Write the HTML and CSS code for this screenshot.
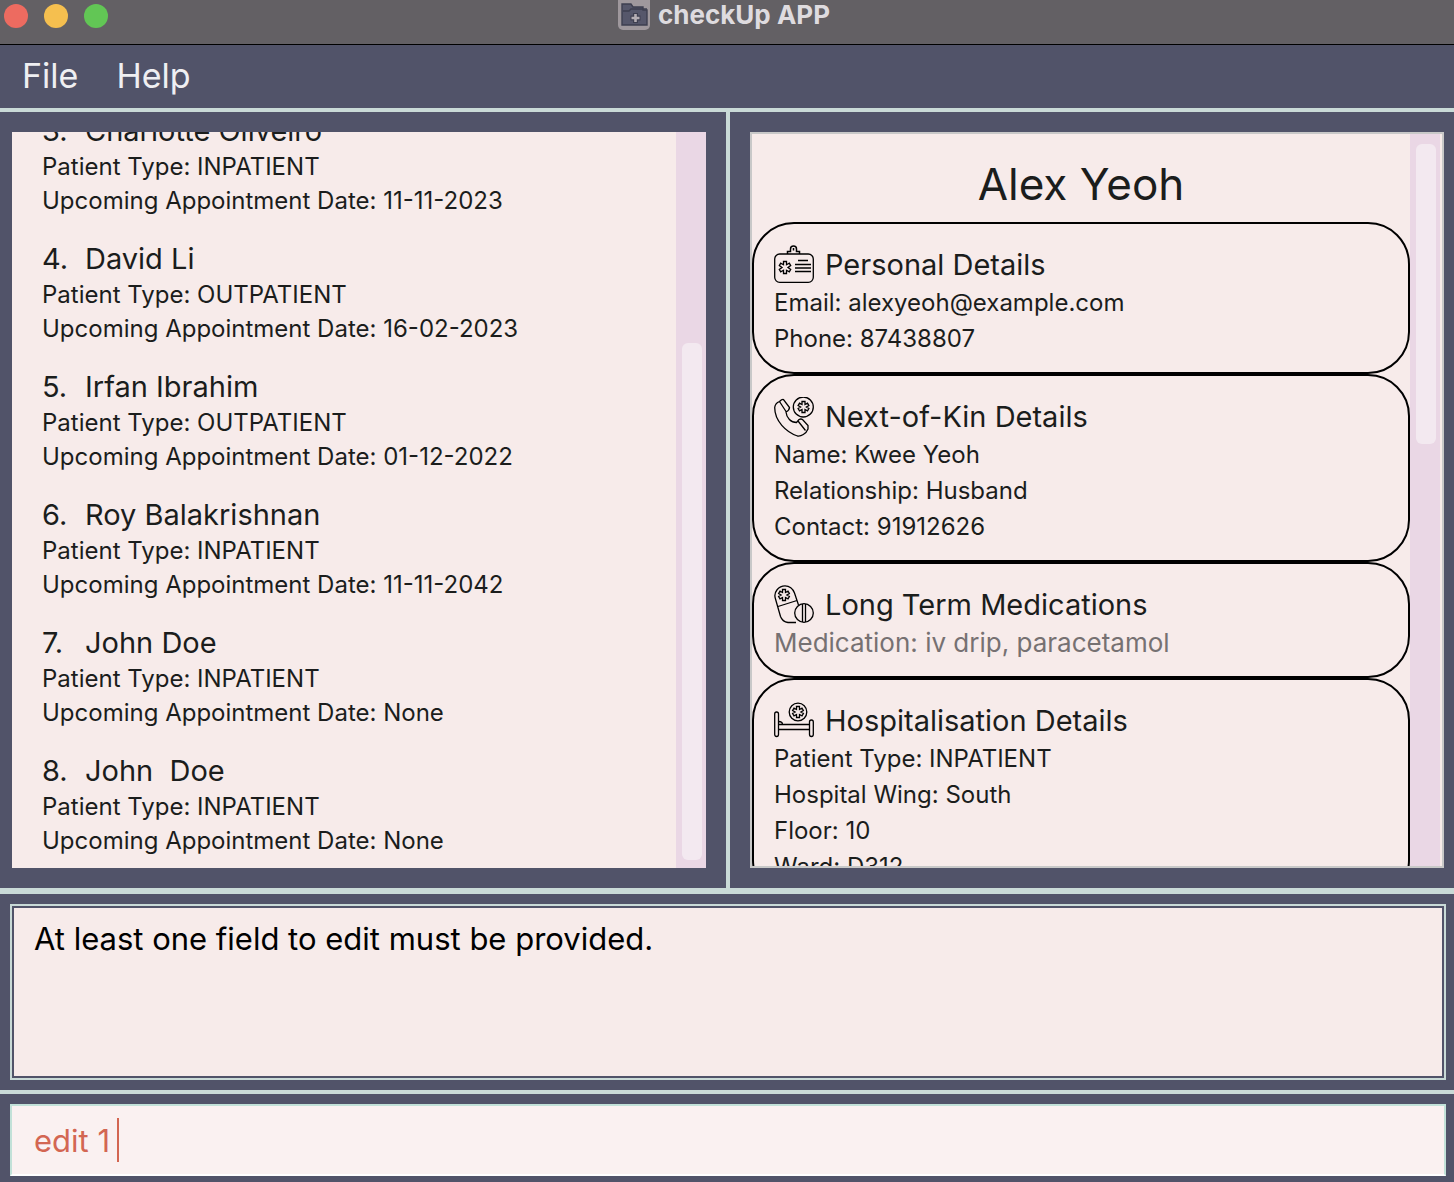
FILE: index.html
```html
<!DOCTYPE html>
<html lang="en">
<head>
<meta charset="utf-8">
<title>checkUp APP</title>
<link rel="stylesheet" href="styles.css">
</head>
<body>
<header class="titlebar">
  <div class="lights"><span class="light red"></span><span class="light amber"></span><span class="light green"></span></div>
  <svg class="app-icon" viewBox="0 0 32 32" aria-hidden="true">
    <rect y="-4" width="32" height="34" rx="5" fill="#9f989d"/>
    <path d="M4 25V4h9l2 3h10v3h4v15z" fill="#56576b" stroke="#3e3f50" stroke-width="1.4"/>
    <path d="M5 11h6l2-2h16" fill="none" stroke="#3e3f50" stroke-width="1.4"/>
    <path d="M17.500 13v10M12.500 18h10" stroke="#3e3f50" stroke-width="5"/>
    <path d="M17.500 14v8M13.500 18h8" stroke="#b5aeb4" stroke-width="2.600"/>
  </svg>
  <h1 class="app-name">checkUp APP</h1>
</header>
<nav class="menubar">
  <button class="menu" type="button">File</button>
  <button class="menu" type="button">Help</button>
</nav>
<main class="split">
  <section class="pane" aria-label="Patients">
    <div class="list-box">
      <ol class="patients">
        <li class="patient"><h2 class="patient-name"><span class="num">3.</span>Charlotte Oliveiro</h2><p>Patient Type: INPATIENT</p><p>Upcoming Appointment Date: 11-11-2023</p></li>
        <li class="patient"><h2 class="patient-name"><span class="num">4.</span>David Li</h2><p>Patient Type: OUTPATIENT</p><p>Upcoming Appointment Date: 16-02-2023</p></li>
        <li class="patient"><h2 class="patient-name"><span class="num">5.</span>Irfan Ibrahim</h2><p>Patient Type: OUTPATIENT</p><p>Upcoming Appointment Date: 01-12-2022</p></li>
        <li class="patient"><h2 class="patient-name"><span class="num">6.</span>Roy Balakrishnan</h2><p>Patient Type: INPATIENT</p><p>Upcoming Appointment Date: 11-11-2042</p></li>
        <li class="patient"><h2 class="patient-name"><span class="num">7.</span>John Doe</h2><p>Patient Type: INPATIENT</p><p>Upcoming Appointment Date: None</p></li>
        <li class="patient"><h2 class="patient-name"><span class="num">8.</span>John  Doe</h2><p>Patient Type: INPATIENT</p><p>Upcoming Appointment Date: None</p></li>
      </ol>
      <div class="track at-end"><div class="thumb list-thumb"></div></div>
    </div>
  </section>
  <section class="pane" aria-label="Patient details">
    <div class="detail-box">
      <div class="details">
        <h2 class="detail-name">Alex Yeoh</h2>
        <article class="card">
          <h3 class="card-title">
            <svg class="icon" viewBox="0 0 40 40" aria-hidden="true"><rect x=".7" y="9" width="38.600" height="28.300" rx="5"/><path d="M13.500 9V6.500h3V4a3 3 0 0 1 6 0v2.500h3V9M19.500 3v2.500M24 15.500h10M21 19.500h16M21 23h16M21 26.500h16" stroke-width="1.500"/><path d="M9.500 16.500h3v3.200l2.800-1.600 1.400 2.500-2.700 1.900 2.700 1.900-1.400 2.500-2.800-1.600v3.200h-3v-3.200l-2.800 1.600-1.400-2.500L8 22.500l-2.700-1.900 1.400-2.500 2.800 1.600z"/></svg>
            Personal Details</h3>
          <p>Email: alexyeoh@example.com</p>
          <p>Phone: 87438807</p>
        </article>
        <article class="card">
          <h3 class="card-title">
            <svg class="icon" viewBox="0 0 40 40" aria-hidden="true"><circle cx="29.300" cy="10" r="10"/><path d="M28 4.500h3v3l2.500-1.400 1.400 2.400-2.500 1.500 2.500 1.500-1.400 2.400L31 12.500v3h-3v-3l-2.500 1.400-1.400-2.400 2.500-1.500-2.500-1.500 1.400-2.400L28 7.500z"/><path d="M5.500 4.500Q8 2 9.500 2.500L15.500 10.500q0 2.500-3.500 4.500c.5 6 5 10.500 10.500 10.500l2.500-3q2-1 3.500 0L34 28.500v3.500c-2 5-7 7.500-10.500 7C12 35 .7 24 .7 10.500 1 7.500 3 5.500 5.500 4.500zM5.500 4.500l6.500 10M24 24l7.500 9.500"/></svg>
            Next-of-Kin Details</h3>
          <p>Name: Kwee Yeoh</p>
          <p>Relationship: Husband</p>
          <p>Contact: 91912626</p>
        </article>
        <article class="card">
          <h3 class="card-title">
            <svg class="icon" viewBox="0 0 40 40" aria-hidden="true"><path d="M22 37.500h-8c-3.500-.5-6-2-7.500-6L1.500 14C-1 7 5 .8 11 .8c5 0 8 3.200 9.500 7.200l4 12M4 21.500l19-6"/><circle cx="30" cy="28" r="9.300"/><path d="M28.500 19v18M31.500 19v18"/><path d="M8.500 4.500h3v3l2.500-1.400 1.400 2.400-2.500 1.500 2.500 1.500-1.400 2.400-2.500-1.400v3h-3v-3L6 13.900l-1.400-2.400L7.100 10 4.600 8.500 6 6.100l2.500 1.400z"/></svg>
            Long Term Medications</h3>
          <p class="medication">Medication: iv drip, paracetamol</p>
        </article>
        <article class="card">
          <h3 class="card-title">
            <svg class="icon" viewBox="0 0 40 40" aria-hidden="true"><rect x=".7" y="11" width="3.800" height="24.500" rx="1.900"/><rect x="35.500" y="19" width="3.800" height="16.500" rx="1.900"/><path d="M4.500 23.500h31M4.500 28.500h31M4.500 20.500q4 0 4 3"/><circle cx="24" cy="11" r="8.800"/><path d="M22.500 5.500h3v3l2.500-1.400 1.400 2.400-2.500 1.500 2.500 1.500-1.400 2.400-2.500-1.400v3h-3v-3L20 14.900l-1.400-2.400 2.500-1.500-2.500-1.500L20 7.100l2.500 1.400z"/></svg>
            Hospitalisation Details</h3>
          <p>Patient Type: INPATIENT</p>
          <p>Hospital Wing: South</p>
          <p>Floor: 10</p>
          <p>Ward: D312</p>
        </article>
      </div>
      <div class="track"><div class="thumb detail-thumb"></div></div>
    </div>
  </section>
</main>
<section class="result">
  <output class="result-box">At least one field to edit must be provided.</output>
</section>
<form class="command">
  <input class="command-input" type="text" value="edit 1" aria-label="Command">
  <span class="caret"></span>
</form>
</body>
</html>
```
FILE: styles.css
```css
* { box-sizing: border-box; }
h1, h2, h3, p, ol { margin: 0; padding: 0; font-weight: 400; }

body {
  margin: 0;
  height: 100vh;
  display: flex;
  flex-direction: column;
  overflow: hidden;
  background: #515369;
  color: #1b1d1c;
  font-family: Inter, "Liberation Sans", sans-serif;
  font-size: 24px;
}

.titlebar {
  position: relative;
  flex: none;
  height: 45px;
  display: flex;
  justify-content: center;
  gap: 8px;
  padding-right: 6px;
  background: #636064;
  border-bottom: 1px solid #000;
}
.lights { position: absolute; left: 4px; top: 4px; display: flex; gap: 16px; }
.light { width: 24px; height: 24px; border-radius: 50%; }
.red { background: #ed6b60; }
.amber { background: #f5bf4f; }
.green { background: #62c655; }
.app-icon { width: 32px; height: 32px; }
.app-name { font-size: 26px; line-height: 30px; font-weight: 700; color: #dedbdf; }

.menubar {
  flex: none;
  height: 67px;
  display: flex;
  align-items: center;
  gap: 38px;
  padding: 0 22px 2px;
  border-bottom: 4px solid #c9dad7;
}
.menu {
  padding: 0;
  border: 0;
  background: none;
  color: #efeff2;
  font-family: inherit;
  font-size: 34px;
  line-height: 44px;
}

.split {
  flex: 1;
  min-height: 0;
  display: grid;
  grid-template-columns: 363fr 362fr;
  grid-template-rows: minmax(0, 1fr);
  gap: 4px;
  background: #c9dad7;
  border-bottom: 6px solid #c9dad7;
}
.pane { display: flex; min-width: 0; padding: 20px 10px 20px 20px; background: #515369; }
.pane:first-child { padding: 20px 20px 20px 12px; }

.list-box, .detail-box { flex: 1; min-width: 0; display: flex; overflow: hidden; background: #f7ebea; }
.patients {
  flex: 1;
  display: flex;
  flex-direction: column;
  justify-content: flex-end;
  gap: 24px;
  padding: 0 12px 10px 30px;
  list-style: none;
  line-height: 34px;
}
.patient { flex: none; white-space: pre; }
.patient-name { display: flex; padding-bottom: 2px; font-size: 29px; line-height: 34px; }
.num { min-width: 43px; }

.track { flex: none; display: flex; flex-direction: column; width: 30px; padding: 10px 4px 8px 6px; background: #ead7e5; }
.at-end { justify-content: flex-end; }
.thumb { border-radius: 6px; background: #f3e9f0; }
.list-thumb { height: 72%; }
.detail-thumb { height: 42%; }

.detail-box { padding-right: 2px; border: 2px solid #c8c8c8; }
.details { flex: 1; min-width: 0; }
.detail-name { padding: 22px 0 10px; font-size: 44px; line-height: 56px; text-align: center; }
.card { padding: 20px 20px 15px; border: 2px solid #000; border-radius: 42px; line-height: 36px; }
.card-title { display: flex; align-items: center; gap: 11px; font-size: 29px; line-height: 41px; }
.icon { width: 40px; height: 40px; fill: none; stroke: #000; stroke-width: 1.3; }
.medication { font-size: 26px; color: #767172; }

.result { flex: none; padding: 10px 8px 10px 10px; border-bottom: 4px solid #c9dad7; }
.result-box {
  display: block;
  height: 176px;
  padding: 13px 22px;
  border: 2px solid #c9dad7;
  outline: 2px solid #515369;
  outline-offset: -4px;
  background: #f7ebea;
  color: #000;
  font-size: 31px;
  line-height: 40px;
}

.command { position: relative; flex: none; padding: 10px 8px 6px 10px; }
.command-input {
  display: block;
  width: 100%;
  height: 72px;
  padding: 0 22px;
  border: 2px solid #c1e1d8;
  border-bottom-color: #fff;
  border-radius: 0;
  outline: 0;
  background: #faf1f1;
  color: #d36652;
  font-family: inherit;
  font-size: 31px;
}
.caret { position: absolute; left: 117px; top: 24px; width: 2px; height: 44px; background: #d36652; }
```
